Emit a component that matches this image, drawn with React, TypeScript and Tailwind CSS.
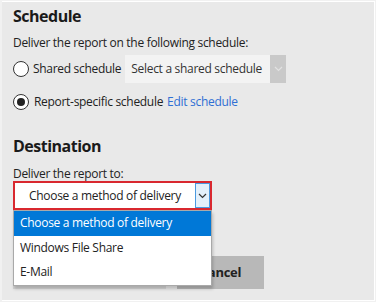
import React from 'react';

const font = "font-['Open_Sans',sans-serif]";

const Chevron: React.FC<{ className?: string }> = ({ className }) => (
  <svg className={className} width="9" height="6" viewBox="0 0 9 6" fill="none">
    <path d="M1 1l3.5 3.5L8 1" stroke="currentColor" strokeWidth="1.2" />
  </svg>
);

const Radio: React.FC<{ checked?: boolean }> = ({ checked }) => (
  <span className="flex h-[16px] w-[16px] shrink-0 items-center justify-center rounded-full border border-[#333] bg-white">
    {checked && <span className="h-[8px] w-[8px] rounded-full bg-[#222]" />}
  </span>
);

const App: React.FC = () => {
  const options = ['Choose a method of delivery', 'Windows File Share', 'E-Mail'];

  return (
    <div className={`h-[302px] w-[376px] bg-[#f1f1f1] pt-[1px] pb-[1px] pr-[1px] pl-[2px] ${font}`}>
      <div className="h-full border-t border-r border-b border-white bg-[#e9e9e9] pl-[11px] text-[12px] tracking-[-0.3px] text-[#222]">
        {/* Schedule */}
        <h2 className="pt-[2px] text-[16px] font-bold leading-[24px] tracking-[-0.5px] text-[#1a1a1a]">Schedule</h2>
        <p className="mt-[6px] leading-[17px]">Deliver the report on the following schedule:</p>

        <div className="mt-[4px] flex h-[28px] items-center">
          <Radio />
          <span className="ml-[4px]">Shared schedule</span>
          <div className="ml-[4px] flex h-[28px] w-[161px] items-center bg-[#f3f3f3]">
            <span className="flex-1 pl-[6px] text-[#333]">Select a shared schedule</span>
            <span className="flex h-full w-[16px] items-center justify-center bg-[#c9c9c9] text-[#e2e2e2]">
              <Chevron />
            </span>
          </div>
        </div>

        <div className="mt-[5px] flex h-[28px] items-center">
          <Radio checked />
          <span className="ml-[5px]">Report-specific schedule</span>
          <a className="ml-[4px] text-[#2f6fd4]">Edit schedule</a>
        </div>

        {/* Destination */}
        <h2 className="mt-[18px] text-[16px] font-bold leading-[24px] tracking-[-0.5px] text-[#1a1a1a]">Destination</h2>
        <p className="mt-[9px] leading-[14px]">Deliver the report to:</p>

        <div className="relative mt-[0px] w-[199px]">
          <div className="flex h-[29px] items-center border-2 border-[#d9282f] bg-white">
            <span className="flex-1 pl-[14px] text-[#222]">Choose a method of delivery</span>
            <span className="flex h-[25px] w-[15px] items-center justify-center border border-[#4a9ae0] bg-[#e3f0fb] text-[#333]">
              <Chevron />
            </span>
          </div>

          {/* Open dropdown list */}
          <ul className="absolute left-0 top-[29px] z-10 w-[199px] border border-[#a9a9a9] bg-white shadow-[1px_3px_3px_rgba(0,0,0,0.2)]">
            {options.map((o, i) => (
              <li
                key={o}
                className={`flex h-[24.5px] items-center pl-[6px] ${
                  i === 0 ? 'bg-[#0078d7] text-white' : 'text-[#222]'
                }`}
              >
                {o}
              </li>
            ))}
          </ul>
        </div>

        {/* Buttons (first one sits under the open list) */}
        <div className="mt-[46px] flex gap-[11px]">
          <button className="h-[33px] w-[153px] bg-[#d6d6d6]" />
          <button className="h-[33px] w-[87px] bg-[#b8b8b8] text-[13px] font-bold text-[#222]">
            Cancel
          </button>
        </div>
      </div>
    </div>
  );
};

export default App;
